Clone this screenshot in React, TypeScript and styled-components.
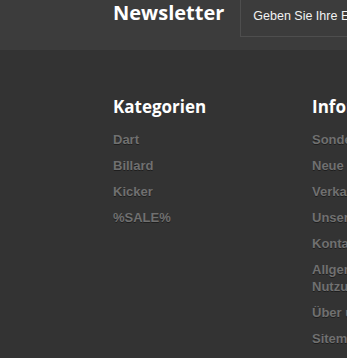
import React from "react";
import styled, { createGlobalStyle } from "styled-components";

const Global = createGlobalStyle`
  html, body { margin: 0; padding: 0; background: #333333; overflow: hidden; }
  body { width: 347px; height: 358px; }
`;

const Page = styled.div`
  width: 347px;
  height: 358px;
  overflow: hidden;
  background: #333333;
`;

const NewsletterBar = styled.div`
  display: flex;
  align-items: flex-start;
  gap: 16px;
  height: 50px;
  padding-left: 113px;
  background: #3c3c3c;
  white-space: nowrap;
`;

const BarTitle = styled.h2`
  margin: 0;
  font-family: "Open Sans", sans-serif;
  font-weight: 700;
  font-size: 20px;
  line-height: 26px;
  color: #ffffff;
`;

const EmailInput = styled.div`
  flex: none;
  box-sizing: border-box;
  width: 260px;
  height: 37px;
  padding: 9px 12px 0;
  border: 1px solid #4e4e4e;
  border-top: none;
  font-family: "Liberation Sans", Arial, sans-serif;
  font-size: 12.5px;
  line-height: 15px;
  color: #f2f2f2;
`;

const Columns = styled.div`
  display: flex;
  gap: 29px;
  padding: 45px 0 0 113px;
`;

const Column = styled.div`
  flex: none;
  width: 170px;
`;

const ColumnTitle = styled.h3`
  margin: 0 0 11.5px;
  font-family: "Open Sans", sans-serif;
  font-weight: 700;
  font-size: 17px;
  line-height: 24px;
  color: #ffffff;
  white-space: nowrap;
`;

const LinkList = styled.ul`
  list-style: none;
  margin: 0;
  padding: 0;
  display: flex;
  flex-direction: column;
  gap: 9px;
`;

const LinkItem = styled.li`
  font-family: "Liberation Sans", Arial, sans-serif;
  font-weight: 700;
  font-size: 13px;
  line-height: 17px;
  color: #707070;
  text-shadow: 0 1px 0 #1e1e1e;
`;

const categories = ["Dart", "Billard", "Kicker", "%SALE%"];
const info = [
  "Sonderangebote",
  "Neue Produkte",
  "Verkaufsschlager",
  "Unsere Filialen",
  "Kontakt",
  "Allgemeine Nutzungsbedingungen",
  "Über uns",
  "Sitemap",
];

export default function App() {
  return (
    <Page>
      <Global />
      <NewsletterBar>
        <BarTitle>Newsletter</BarTitle>
        <EmailInput>Geben Sie Ihre E-Mail-Adresse ein</EmailInput>
      </NewsletterBar>
      <Columns>
        <Column>
          <ColumnTitle>Kategorien</ColumnTitle>
          <LinkList>
            {categories.map((c) => (
              <LinkItem key={c}>{c}</LinkItem>
            ))}
          </LinkList>
        </Column>
        <Column>
          <ColumnTitle>Informationen</ColumnTitle>
          <LinkList>
            {info.map((c) => (
              <LinkItem key={c}>{c}</LinkItem>
            ))}
          </LinkList>
        </Column>
      </Columns>
    </Page>
  );
}
